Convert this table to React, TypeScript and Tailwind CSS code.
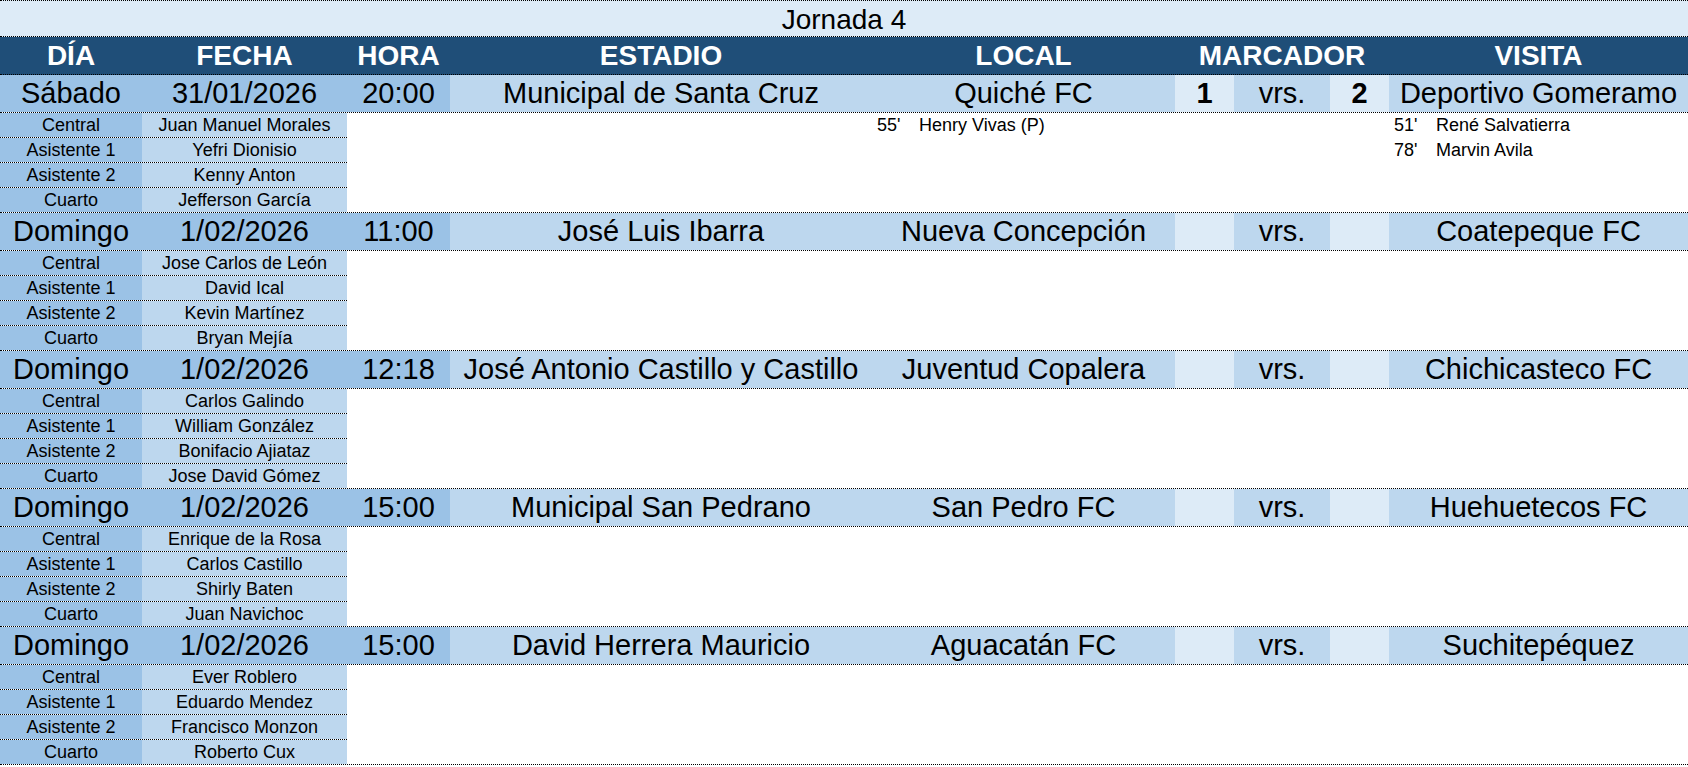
type Goal = { min: string; name: string };

type Match = {
  day: string;
  date: string;
  time: string;
  stadium: string;
  home: string;
  away: string;
  homeScore?: string;
  awayScore?: string;
  refs: string[];
  homeGoals?: Goal[];
  awayGoals?: Goal[];
};

const roles = ["Central", "Asistente 1", "Asistente 2", "Cuarto"];

const matches: Match[] = [
  {
    day: "Sábado",
    date: "31/01/2026",
    time: "20:00",
    stadium: "Municipal de Santa Cruz",
    home: "Quiché FC",
    away: "Deportivo Gomeramo",
    homeScore: "1",
    awayScore: "2",
    refs: ["Juan Manuel Morales", "Yefri Dionisio", "Kenny Anton", "Jefferson García"],
    homeGoals: [{ min: "55'", name: "Henry Vivas (P)" }],
    awayGoals: [
      { min: "51'", name: "René Salvatierra" },
      { min: "78'", name: "Marvin Avila" },
    ],
  },
  {
    day: "Domingo",
    date: "1/02/2026",
    time: "11:00",
    stadium: "José Luis Ibarra",
    home: "Nueva Concepción",
    away: "Coatepeque FC",
    refs: ["Jose Carlos de León", "David Ical", "Kevin Martínez", "Bryan Mejía"],
  },
  {
    day: "Domingo",
    date: "1/02/2026",
    time: "12:18",
    stadium: "José Antonio Castillo y Castillo",
    home: "Juventud Copalera",
    away: "Chichicasteco FC",
    refs: ["Carlos Galindo", "William González", "Bonifacio Ajiataz", "Jose David Gómez"],
  },
  {
    day: "Domingo",
    date: "1/02/2026",
    time: "15:00",
    stadium: "Municipal San Pedrano",
    home: "San Pedro FC",
    away: "Huehuetecos FC",
    refs: ["Enrique de la Rosa", "Carlos Castillo", "Shirly Baten", "Juan Navichoc"],
  },
  {
    day: "Domingo",
    date: "1/02/2026",
    time: "15:00",
    stadium: "David Herrera Mauricio",
    home: "Aguacatán FC",
    away: "Suchitepéquez",
    refs: ["Ever Roblero", "Eduardo Mendez", "Francisco Monzon", "Roberto Cux"],
  },
];

const cols = "grid grid-cols-[142px_205px_103px_422px_303px_59px_96px_59px_299px]";

export default function App() {
  return (
    <div className="w-[1688px] bg-white font-['Liberation_Sans',Arial,sans-serif] text-black">
      <div className="h-[37px] border-y border-dotted border-black bg-[#ddebf7] pt-[2px] text-center text-[28px] leading-[33px]">
        Jornada 4
      </div>

      <div className={`${cols} h-[38px] border-b border-dotted border-black bg-[#1f4e78] text-center text-[28px] font-bold leading-[38px] text-white`}>
        <div>DÍA</div>
        <div>FECHA</div>
        <div>HORA</div>
        <div>ESTADIO</div>
        <div>LOCAL</div>
        <div className="col-span-3">MARCADOR</div>
        <div>VISITA</div>
      </div>

      {matches.map((m, i) => (
        <MatchBlock key={i} match={m} />
      ))}
    </div>
  );
}

function MatchBlock({ match }: { match: Match }) {
  return (
    <section className="border-b border-dotted border-black">
      <div className={`${cols} h-[38px] border-b border-dotted border-black text-center text-[29px] leading-[37px] whitespace-nowrap`}>
        <div className="bg-[#9bc2e6]">{match.day}</div>
        <div className="bg-[#9bc2e6]">{match.date}</div>
        <div className="bg-[#9bc2e6]">{match.time}</div>
        <div className="bg-[#bdd7ee]">{match.stadium}</div>
        <div className="bg-[#bdd7ee]">{match.home}</div>
        <div className="bg-[#ddebf7] font-bold">{match.homeScore}</div>
        <div className="bg-[#bdd7ee]">vrs.</div>
        <div className="bg-[#ddebf7] font-bold">{match.awayScore}</div>
        <div className="bg-[#bdd7ee]">{match.away}</div>
      </div>

      <div className={`${cols} h-[99px] text-[18px] leading-[24px]`}>
        <div className="col-span-2 flex flex-col">
          {match.refs.map((name, i) => (
            <div
              key={i}
              className={`grid grid-cols-[142px_205px] text-center whitespace-nowrap ${
                i < 3 ? "h-[25px] border-b border-dotted border-black" : "h-[24px]"
              }`}
            >
              <div className="bg-[#9bc2e6]">{roles[i]}</div>
              <div className="bg-[#bdd7ee]">{name}</div>
            </div>
          ))}
        </div>
        <div className="col-span-2" />
        <GoalList goals={match.homeGoals} />
        <div className="col-span-3" />
        <GoalList goals={match.awayGoals} />
      </div>
    </section>
  );
}

function GoalList({ goals = [] }: { goals?: Goal[] }) {
  return (
    <div className="flex flex-col">
      {goals.map((g, i) => (
        <div key={i} className="flex h-[25px] pl-[5px] whitespace-nowrap">
          <span className="w-[42px]">{g.min}</span>
          <span>{g.name}</span>
        </div>
      ))}
    </div>
  );
}
